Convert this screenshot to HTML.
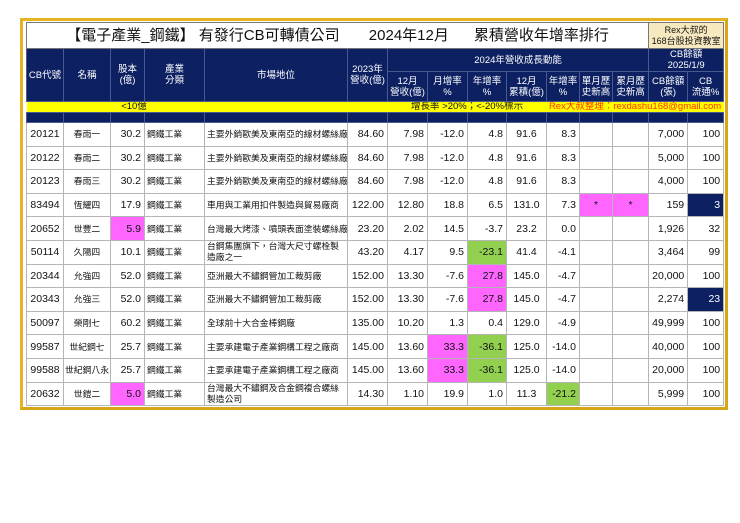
<!DOCTYPE html>
<html><head><meta charset="utf-8"><style>
*{margin:0;padding:0;box-sizing:border-box}
body{width:740px;height:523px;background:#fff;position:relative;font-family:"Liberation Sans","Noto Sans CJK TC",sans-serif;overflow:hidden}
.frame{position:absolute;left:20px;top:18px;width:708px;height:392px;border:3px solid #e6b422;border-right-color:#d9a515;border-bottom-color:#d9a515;background:#fff}
table{position:absolute;left:26px;top:22px;border-collapse:collapse;table-layout:fixed;width:697px}
td{border:1px solid #b5b5b5;font-size:10.5px;line-height:12px;color:#111;white-space:nowrap;overflow:hidden;padding:0 3px}
.d td{height:23.6px}
.k{font-size:8.8px;padding:0 2px}
.h td{background:#0c2062;color:#fff;text-align:center;font-size:9.5px;line-height:11px;border-color:#4a5a90;padding:0 1px}
.t td{height:26px;font-size:15px;line-height:18px;text-align:center;border:1px solid #777}
.y td{background:#ffff00;height:10px;font-size:9.5px;line-height:10px;border:none;padding:0}
.n td{background:#0c2062;height:10px;border-color:#4a5a90}
.c{text-align:center}.r{text-align:right}.l{text-align:left}
.m{background:#ff66ff}.g{background:#92d050}.b{background:#0c2062;color:#fff}
.w{white-space:normal;line-height:11px;font-size:8.8px;padding:0 2px}
</style></head><body>
<div class="frame"></div>
<table>
<colgroup><col style="width:37px"><col style="width:47px"><col style="width:34px"><col style="width:60px"><col style="width:143px"><col style="width:40px"><col style="width:40px"><col style="width:40px"><col style="width:39px"><col style="width:40px"><col style="width:33px"><col style="width:33px"><col style="width:36px"><col style="width:39px"><col style="width:36px"></colgroup>
<tr class="t"><td colspan="13">【電子產業_鋼鐵】 有發行CB可轉債公司 &nbsp;&nbsp;&nbsp;&nbsp;&nbsp; 2024年12月 &nbsp;&nbsp;&nbsp;&nbsp; 累積營收年增率排行</td><td colspan="2" style="background:#f7e9bf;font-size:9px;line-height:11px;padding:0">Rex大叔的<br>168台股投資教室</td></tr>
<tr class="h" style="height:22px"><td rowspan="2" style="height:52px">CB代號</td><td rowspan="2">名稱</td><td rowspan="2">股本<br>(億)</td><td rowspan="2">產業<br>分類</td><td rowspan="2">市場地位</td><td rowspan="2">2023年<br>營收(億)</td><td colspan="7" style="height:22px">2024年營收成長動能</td><td colspan="2">CB餘額<br>2025/1/9</td></tr>
<tr class="h"><td style="height:30px">12月<br>營收(億)</td><td>月增率<br>%</td><td>年增率<br>%</td><td>12月<br>累積(億)</td><td>年增率<br>%</td><td>單月歷<br>史新高</td><td>累月歷<br>史新高</td><td>CB餘額<br>(張)</td><td>CB<br>流通%</td></tr>
<tr class="y"><td></td><td colspan="3" class="c">&lt;10億</td><td></td><td></td><td colspan="4" class="c">增長率 &gt;20%；&lt;-20%標示</td><td colspan="5" class="c" style="color:#ff3300">Rex大叔整理：rexdashu168@gmail.com</td></tr>
<tr class="n"><td></td><td></td><td></td><td></td><td></td><td></td><td></td><td></td><td></td><td></td><td></td><td></td><td></td><td></td><td></td></tr>
<tr class="d"><td class="c">20121</td><td class="c k">春雨一</td><td class="r">30.2</td><td class="k">鋼鐵工業</td><td class="k">主要外銷歐美及東南亞的線材螺絲廠</td><td class="r">84.60</td><td class="r">7.98</td><td class="r">-12.0</td><td class="r">4.8</td><td class="c">91.6</td><td class="r">8.3</td><td></td><td></td><td class="r">7,000</td><td class="r">100</td></tr>
<tr class="d"><td class="c">20122</td><td class="c k">春雨二</td><td class="r">30.2</td><td class="k">鋼鐵工業</td><td class="k">主要外銷歐美及東南亞的線材螺絲廠</td><td class="r">84.60</td><td class="r">7.98</td><td class="r">-12.0</td><td class="r">4.8</td><td class="c">91.6</td><td class="r">8.3</td><td></td><td></td><td class="r">5,000</td><td class="r">100</td></tr>
<tr class="d"><td class="c">20123</td><td class="c k">春雨三</td><td class="r">30.2</td><td class="k">鋼鐵工業</td><td class="k">主要外銷歐美及東南亞的線材螺絲廠</td><td class="r">84.60</td><td class="r">7.98</td><td class="r">-12.0</td><td class="r">4.8</td><td class="c">91.6</td><td class="r">8.3</td><td></td><td></td><td class="r">4,000</td><td class="r">100</td></tr>
<tr class="d"><td class="c">83494</td><td class="c k">恆耀四</td><td class="r">17.9</td><td class="k">鋼鐵工業</td><td class="k">車用與工業用扣件製造與貿易廠商</td><td class="r">122.00</td><td class="r">12.80</td><td class="r">18.8</td><td class="r">6.5</td><td class="c">131.0</td><td class="r">7.3</td><td class="c m">*</td><td class="c m">*</td><td class="r">159</td><td class="r b">3</td></tr>
<tr class="d"><td class="c">20652</td><td class="c k">世豐二</td><td class="r m">5.9</td><td class="k">鋼鐵工業</td><td class="k">台灣最大烤漆、噴頭表面塗裝螺絲廠</td><td class="r">23.20</td><td class="r">2.02</td><td class="r">14.5</td><td class="r">-3.7</td><td class="c">23.2</td><td class="r">0.0</td><td></td><td></td><td class="r">1,926</td><td class="r">32</td></tr>
<tr class="d"><td class="c">50114</td><td class="c k">久陽四</td><td class="r">10.1</td><td class="k">鋼鐵工業</td><td class="w">台鋼集團旗下，台灣大尺寸螺栓製造廠之一</td><td class="r">43.20</td><td class="r">4.17</td><td class="r">9.5</td><td class="r g">-23.1</td><td class="c">41.4</td><td class="r">-4.1</td><td></td><td></td><td class="r">3,464</td><td class="r">99</td></tr>
<tr class="d"><td class="c">20344</td><td class="c k">允強四</td><td class="r">52.0</td><td class="k">鋼鐵工業</td><td class="k">亞洲最大不鏽鋼管加工裁剪廠</td><td class="r">152.00</td><td class="r">13.30</td><td class="r">-7.6</td><td class="r m">27.8</td><td class="c">145.0</td><td class="r">-4.7</td><td></td><td></td><td class="r">20,000</td><td class="r">100</td></tr>
<tr class="d"><td class="c">20343</td><td class="c k">允強三</td><td class="r">52.0</td><td class="k">鋼鐵工業</td><td class="k">亞洲最大不鏽鋼管加工裁剪廠</td><td class="r">152.00</td><td class="r">13.30</td><td class="r">-7.6</td><td class="r m">27.8</td><td class="c">145.0</td><td class="r">-4.7</td><td></td><td></td><td class="r">2,274</td><td class="r b">23</td></tr>
<tr class="d"><td class="c">50097</td><td class="c k">榮剛七</td><td class="r">60.2</td><td class="k">鋼鐵工業</td><td class="k">全球前十大合金棒鋼廠</td><td class="r">135.00</td><td class="r">10.20</td><td class="r">1.3</td><td class="r">0.4</td><td class="c">129.0</td><td class="r">-4.9</td><td></td><td></td><td class="r">49,999</td><td class="r">100</td></tr>
<tr class="d"><td class="c">99587</td><td class="c k">世紀鋼七</td><td class="r">25.7</td><td class="k">鋼鐵工業</td><td class="k">主要承建電子產業鋼構工程之廠商</td><td class="r">145.00</td><td class="r">13.60</td><td class="r m">33.3</td><td class="r g">-36.1</td><td class="c">125.0</td><td class="r">-14.0</td><td></td><td></td><td class="r">40,000</td><td class="r">100</td></tr>
<tr class="d"><td class="c">99588</td><td class="c k" style="padding:0">世紀鋼八永</td><td class="r">25.7</td><td class="k">鋼鐵工業</td><td class="k">主要承建電子產業鋼構工程之廠商</td><td class="r">145.00</td><td class="r">13.60</td><td class="r m">33.3</td><td class="r g">-36.1</td><td class="c">125.0</td><td class="r">-14.0</td><td></td><td></td><td class="r">20,000</td><td class="r">100</td></tr>
<tr class="d"><td class="c">20632</td><td class="c k">世鎧二</td><td class="r m">5.0</td><td class="k">鋼鐵工業</td><td class="w">台灣最大不鏽鋼及合金鋼複合螺絲製造公司</td><td class="r">14.30</td><td class="r">1.10</td><td class="r">19.9</td><td class="r">1.0</td><td class="c">11.3</td><td class="r g">-21.2</td><td></td><td></td><td class="r">5,999</td><td class="r">100</td></tr>
</table>
</body></html>
